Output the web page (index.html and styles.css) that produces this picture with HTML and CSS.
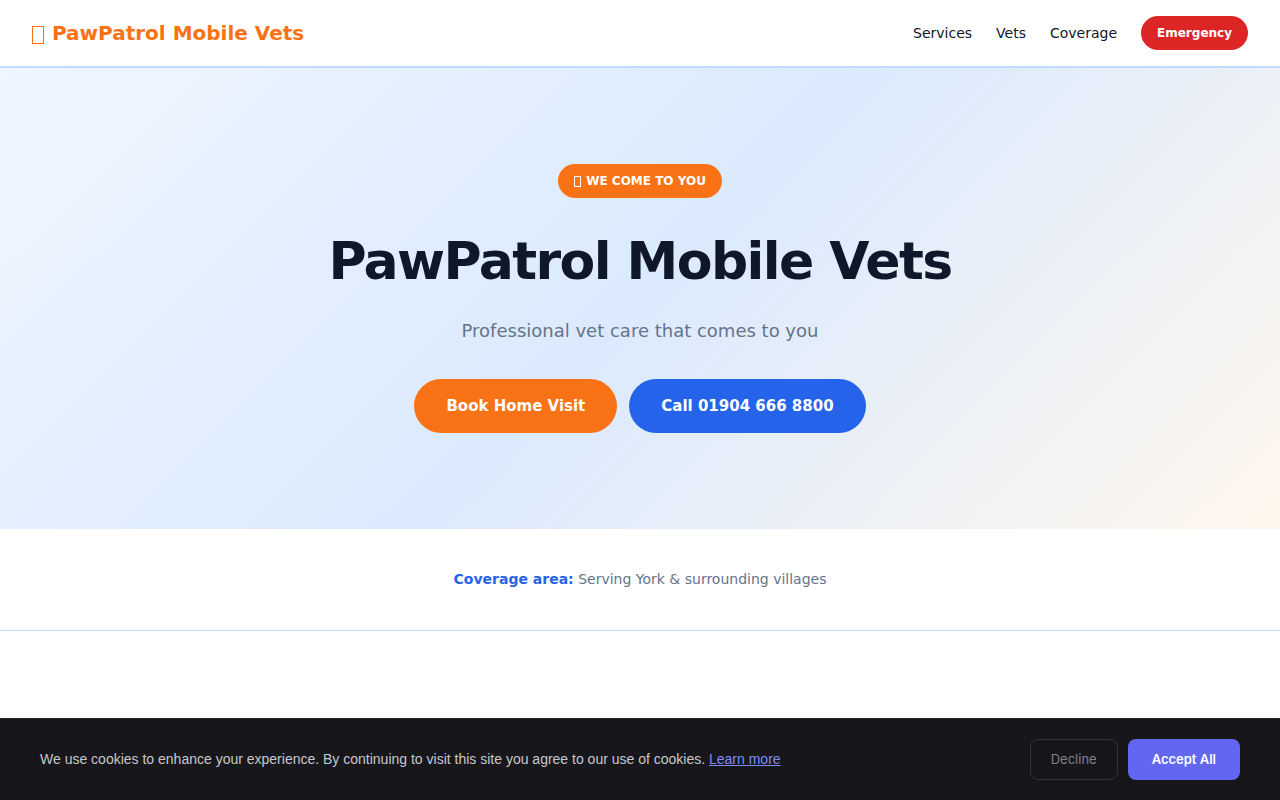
FILE: index.html
```html
<!DOCTYPE html>
<html lang="en">
<head>
  <meta charset="UTF-8" />
  <meta name="viewport" content="width=device-width, initial-scale=1.0" />
  <title>PawPatrol Mobile Vets</title>
  <link rel="stylesheet" href="styles.css">
</head>
<body>
  <header class="nav">
    <a href="#" class="logo"><span class="glyph"></span> PawPatrol Mobile Vets</a>
    <nav class="nav-links">
      <a href="#services">Services</a>
      <a href="#vets">Vets</a>
      <a href="#coverage">Coverage</a>
      <a href="#emergency" class="emergency">Emergency</a>
    </nav>
  </header>

  <section class="hero">
    <span class="badge"><span class="glyph glyph-small"></span> WE COME TO YOU</span>
    <h1>PawPatrol Mobile Vets</h1>
    <p>Professional vet care that comes to you</p>
    <div class="cta">
      <a href="#book" class="btn btn-orange">Book Home Visit</a>
      <a href="tel:019046668800" class="btn btn-blue">Call 01904 666 8800</a>
    </div>
  </section>

  <section class="coverage" id="coverage">
    <p><strong>Coverage area:</strong> Serving York &amp; surrounding villages</p>
  </section>

  <div class="cookie-bar">
    <p>We use cookies to enhance your experience. By continuing to visit this site you agree to our use of cookies. <a href="#cookies">Learn more</a></p>
    <div class="cookie-actions">
      <button class="decline" type="button">Decline</button>
      <button class="accept" type="button">Accept All</button>
    </div>
  </div>
</body>
</html>
```

FILE: styles.css
```css
* {
  box-sizing: border-box;
  margin: 0;
  padding: 0;
}
body {
  font-family: "DejaVu Sans", sans-serif;
  color: #0f172a;
  background: #fff;
  line-height: 1.6;
}
a {
  text-decoration: none;
  color: inherit;
}
.nav {
  display: flex;
  justify-content: space-between;
  align-items: center;
  padding: 16px 32px;
  border-bottom: 2px solid #bfdbfe;
}
.logo {
  font-size: 20px;
  font-weight: 700;
  color: #f97316;
}
.glyph {
  display: inline-block;
  width: 12px;
  height: 18px;
  margin-right: 1px;
  border: 1px solid currentColor;
  vertical-align: -4px;
}
.glyph-small {
  width: 7px;
  height: 11px;
  vertical-align: -2px;
}
.nav-links {
  display: flex;
  align-items: center;
  gap: 24px;
  font-size: 14px;
}
.nav-links .emergency {
  background: #dc2626;
  color: #fff;
  font-size: 12px;
  font-weight: 700;
  line-height: 18px;
  padding: 8px 16px;
  border-radius: 24px;
}
.hero {
  padding: 96px 32px;
  text-align: center;
  background: linear-gradient(135deg, #eff6ff 0%, #dbeafe 50%, #fff7ed 100%);
}
.badge {
  display: inline-block;
  background: #f97316;
  color: #fff;
  font-size: 12px;
  font-weight: 700;
  line-height: 18px;
  padding: 8px 16px;
  border-radius: 24px;
  margin-bottom: 32px;
}
.hero h1 {
  font-size: 52px;
  font-weight: 800;
  line-height: 63px;
  letter-spacing: -0.03em;
  margin-bottom: 24px;
}
.hero p {
  font-size: 18px;
  line-height: 28px;
  color: #64748b;
  margin-bottom: 34px;
}
.cta {
  display: flex;
  justify-content: center;
  flex-wrap: wrap;
  gap: 12px;
}
.btn {
  color: #fff;
  font-size: 15px;
  font-weight: 700;
  line-height: 22px;
  padding: 16px 32px;
  border-radius: 32px;
}
.btn-orange {
  background: #f97316;
}
.btn-blue {
  background: #2563eb;
}
.coverage {
  padding: 40px 32px;
  text-align: center;
  font-size: 14px;
  line-height: 21px;
  color: #64748b;
  border-bottom: 1px solid #bfdbfe;
}
.coverage strong {
  color: #2563eb;
}
.cookie-bar {
  position: fixed;
  left: 0;
  right: 0;
  bottom: 0;
  display: flex;
  justify-content: space-between;
  align-items: center;
  gap: 20px;
  padding: 20px 40px;
  background: #17171b;
  border-top: 1px solid #222226;
  font-family: "Liberation Sans", Arial, sans-serif;
  font-size: 14px;
  color: #c8c8cc;
}
.cookie-bar a {
  color: #818cf8;
  text-decoration: underline;
}
.cookie-actions {
  display: flex;
  gap: 10px;
}
.cookie-actions button {
  font-family: Inter, sans-serif;
  font-size: 13px;
  line-height: 19px;
  border-radius: 8px;
  cursor: pointer;
}
.decline {
  padding: 10px 20px;
  color: #808086;
  background: transparent;
  border: 1px solid #333338;
}
.accept {
  padding: 11px 24px;
  color: #fff;
  font-weight: 600;
  background: #6366f1;
  border: none;
}
```
